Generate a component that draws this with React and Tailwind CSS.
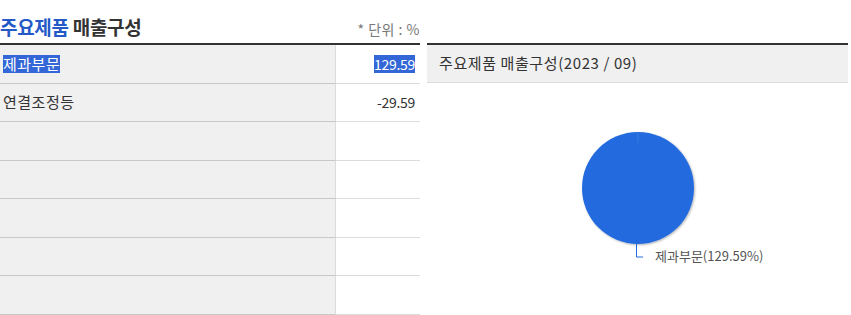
const ROWS = [
  { name: '제과부문', value: '129.59', selected: true },
  { name: '연결조정등', value: '-29.59' },
  { name: '', value: '' },
  { name: '', value: '' },
  { name: '', value: '' },
  { name: '', value: '' },
  { name: '', value: '' },
];

export default function App() {
  return (
    <div className="w-[851px] h-[315px] bg-white flex overflow-hidden font-['Noto_Sans_CJK_KR','Noto_Sans',sans-serif] text-[#333]">
      {/* Left: table */}
      <div className="w-[420px] flex flex-col">
        <div className="h-[43px] flex items-end justify-between pb-[7px]">
          <h2 className="text-[19px] font-bold leading-none tracking-[-0.3px]">
            <span className="text-[#2459c7]">주요제품</span> <span className="text-[#333]">매출구성</span>
          </h2>
          <span className="text-[14px] text-[#777] leading-none tracking-[0.5px]">* 단위 : %</span>
        </div>
        <div className="border-t-2 border-[#333]">
          {ROWS.map((r, i) => (
            <div key={i} className="flex h-[38.5px]">
              <div className="w-[336px] bg-[#f0f0f0] border-b border-[#c8c8c8] border-r border-r-[#dcdcdc] flex items-center pl-[3px] text-[15px] text-[#333] tracking-[0.5px]">
                {r.selected ? <span className="bg-[#3366d6] text-white leading-[18px]">{r.name}</span> : r.name}
              </div>
              <div className="flex-1 border-b border-[#dcdcdc] flex items-center justify-end pr-[5px] text-[14px] text-[#333] tracking-[-0.3px]">
                {r.selected ? <span className="bg-[#3366d6] text-white leading-[18px]">{r.value}</span> : r.value}
              </div>
            </div>
          ))}
        </div>
      </div>

      {/* Right: chart */}
      <div className="w-[421px] ml-[7px] pt-[43px] flex flex-col">
        <div className="border-t-2 border-[#333] bg-[#f0f0f0] border-b border-b-[#dcdcdc] h-[40px] flex items-center pl-[12px] text-[15px] text-[#333] tracking-[0.6px]">
          주요제품 매출구성(2023 / 09)
        </div>
        <div className="flex-1 flex pl-[130px] pt-[43px]">
          <svg width="260" height="150" viewBox="0 0 260 150">
            <defs>
              <filter id="sh" x="-20%" y="-20%" width="140%" height="140%">
                <feDropShadow dx="1" dy="1" stdDeviation="1" floodColor="#000" floodOpacity="0.3" />
              </filter>
            </defs>
            <circle cx="81" cy="62" r="56" fill="#226bdd" filter="url(#sh)" />
            <line x1="81" y1="6" x2="81" y2="17" stroke="#4f86e3" strokeWidth="0.6" />
            <path d="M79.5 118 V131 H86" fill="none" stroke="#226bdd" strokeWidth="1" />
            <text x="98" y="135" fontSize="13" fill="#555" fontFamily="Noto Sans CJK KR, Noto Sans, sans-serif">제과부문(129.59%)</text>
          </svg>
        </div>
      </div>
    </div>
  );
}
